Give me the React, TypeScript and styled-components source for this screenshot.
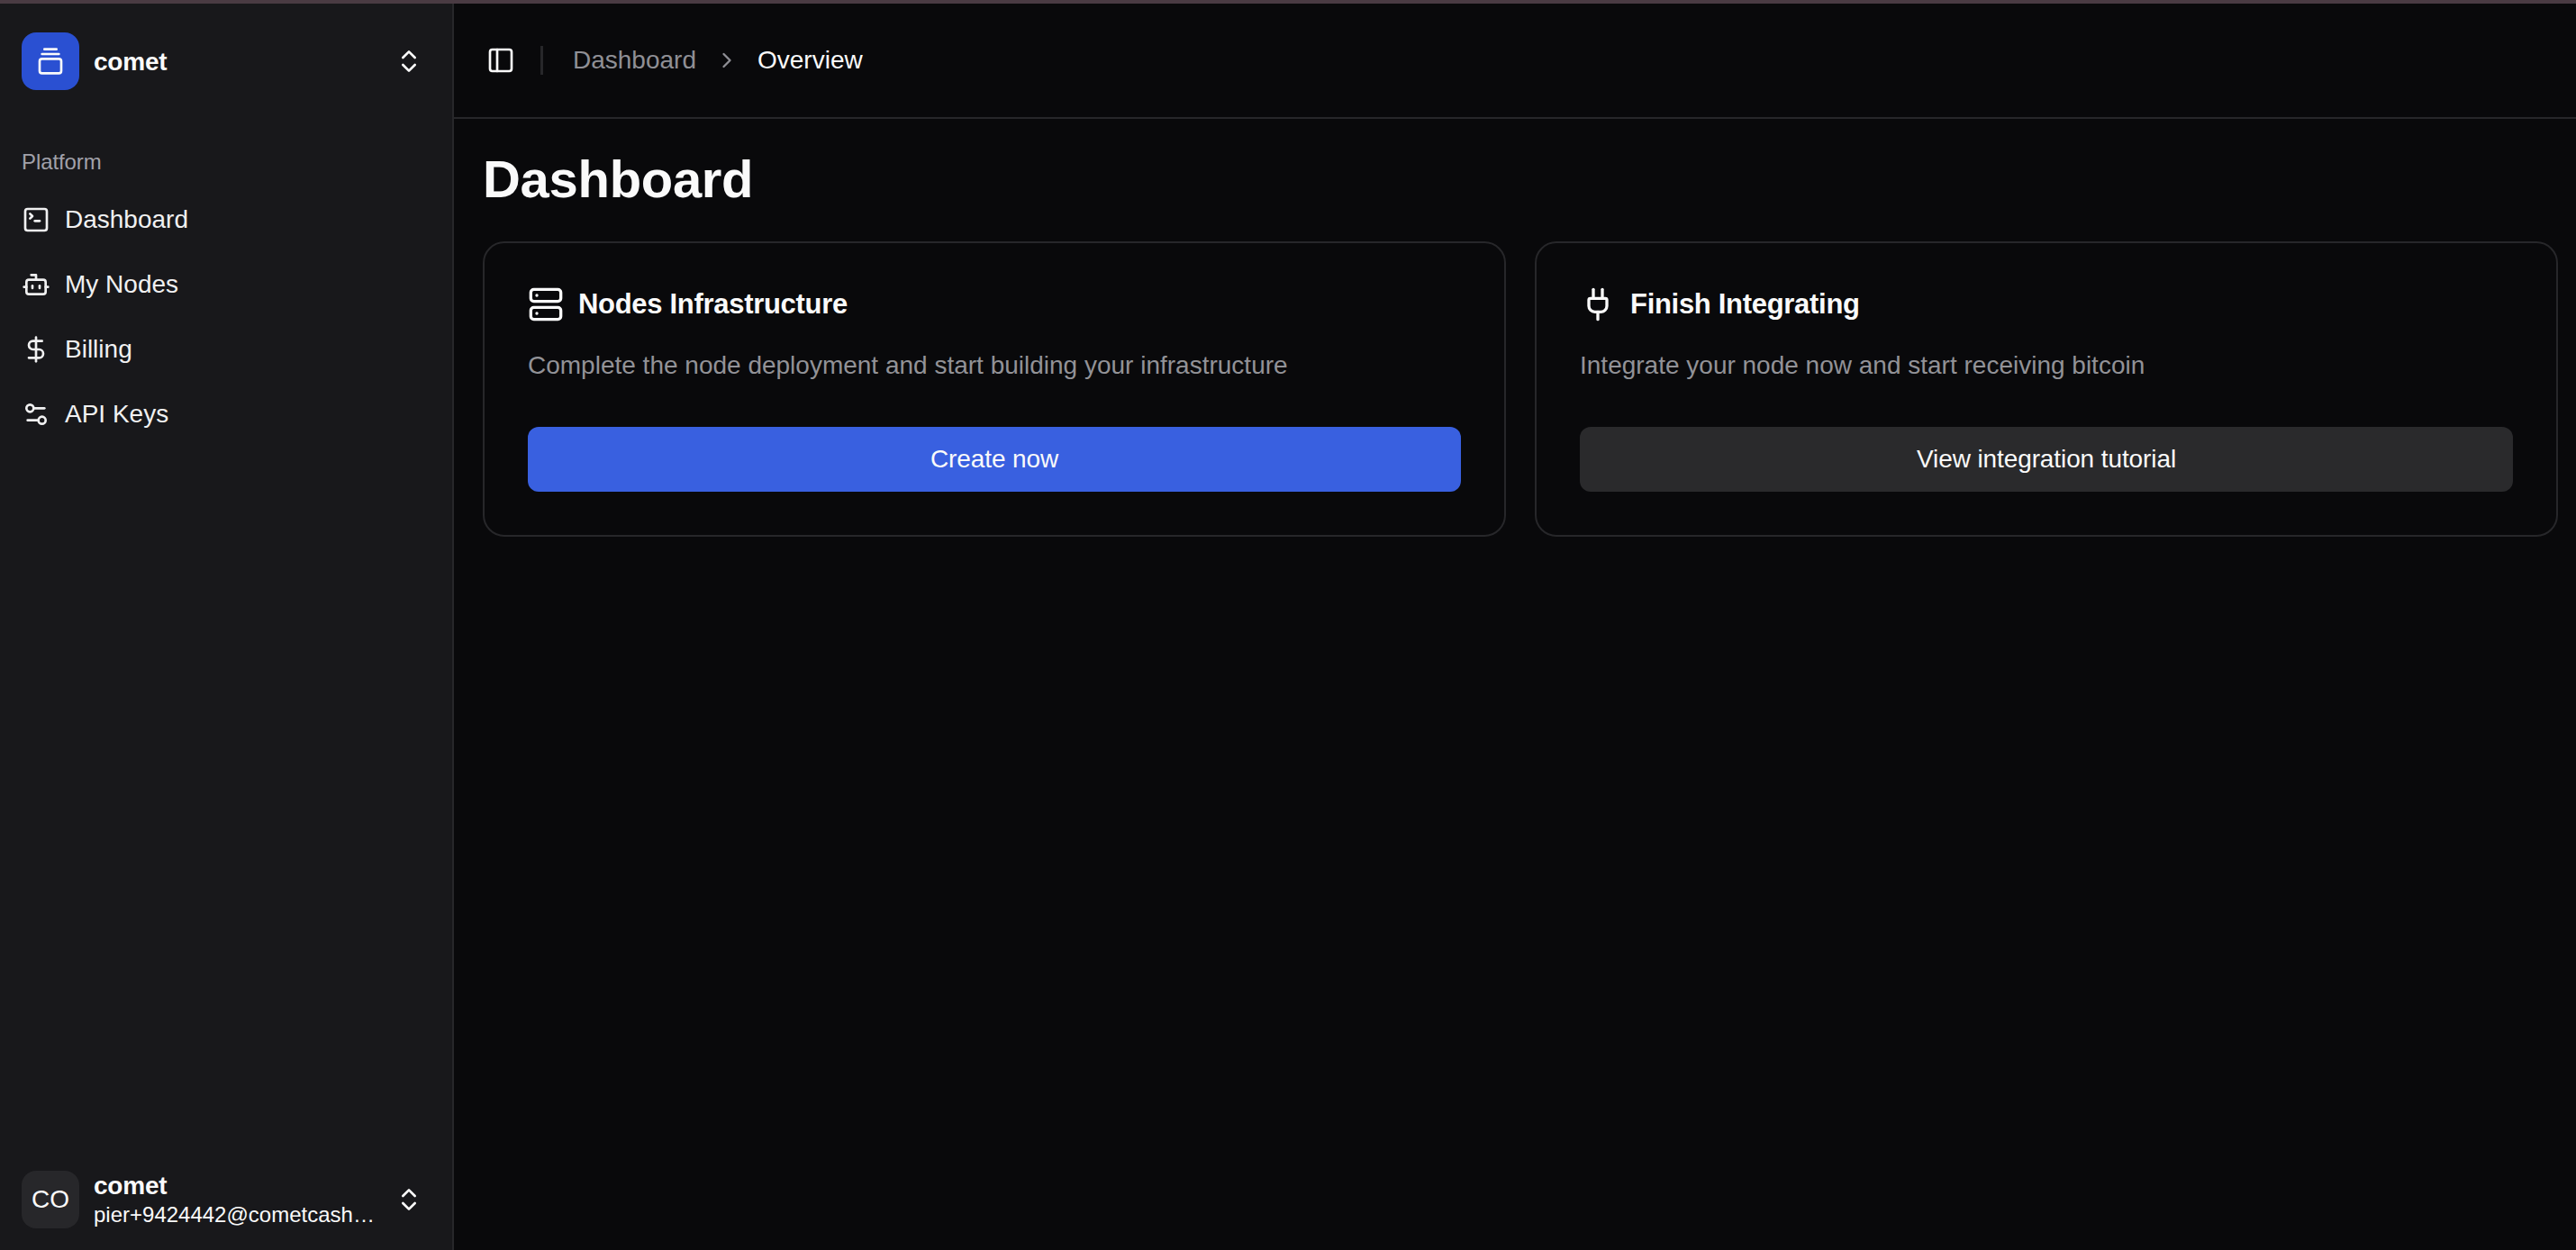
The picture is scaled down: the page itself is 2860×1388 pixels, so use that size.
import React from "react";
import styled, { createGlobalStyle } from "styled-components";
import {
  Bot,
  ChevronRight,
  ChevronsUpDown,
  DollarSign,
  GalleryVerticalEnd,
  PanelLeft,
  Plug,
  Server,
  Settings2,
  SquareTerminal,
} from "lucide-react";

const GlobalStyle = createGlobalStyle`
  * {
    box-sizing: border-box;
  }

  html,
  body {
    margin: 0;
    height: 100%;
    background: #09090b;
  }

  body {
    font-family: "Liberation Sans", Arial, sans-serif;
    color: #fafafa;
  }
`;

const Page = styled.div`
  display: flex;
  flex-direction: column;
  height: 100vh;
  overflow: hidden;
`;

const TopStrip = styled.div`
  flex: none;
  height: 4px;
  background: #4a3b43;
`;

const Shell = styled.div`
  display: flex;
  flex: 1;
  min-height: 0;
`;

const Sidebar = styled.aside`
  display: flex;
  flex: none;
  flex-direction: column;
  width: 504px;
  background: #18181b;
  border-right: 2px solid #27272a;
`;

const SidebarRow = styled.div`
  display: flex;
  align-items: center;
  padding: 32px 32px 0 24px;
`;

const FooterRow = styled(SidebarRow)`
  margin-top: auto;
  padding: 0 32px 24px 24px;
`;

const Tile = styled.div<{ $color: string }>`
  display: flex;
  flex: none;
  align-items: center;
  justify-content: center;
  width: 64px;
  height: 64px;
  border-radius: 16px;
  background: ${(p) => p.$color};
  font-size: 28px;
`;

const RowText = styled.div`
  display: flex;
  flex: 1;
  flex-direction: column;
  min-width: 0;
  margin-left: 16px;
  padding-top: 2px;
`;

const FooterText = styled(RowText)`
  height: 64px;
  padding-top: 1px;
`;

const Name = styled.span`
  font-weight: 700;
  font-size: 28px;
  line-height: 32px;
  letter-spacing: -0.2px;
`;

const Email = styled.span`
  overflow: hidden;
  width: 312px;
  font-size: 24px;
  line-height: 32px;
  white-space: nowrap;
  text-overflow: ellipsis;
`;

const NavGroup = styled.nav`
  display: flex;
  flex-direction: column;
  gap: 8px;
  padding: 0 24px;
`;

const GroupLabel = styled.div`
  margin: 60px 0 4px;
  font-size: 24px;
  line-height: 40px;
  color: #a1a1aa;
  letter-spacing: -0.1px;
`;

const NavItem = styled.a`
  display: flex;
  align-items: center;
  gap: 16px;
  height: 64px;
  font-size: 28px;
  color: #f0f0f1;
`;

const Main = styled.main`
  display: flex;
  flex: 1;
  flex-direction: column;
  min-width: 0;
`;

const TopBar = styled.header`
  display: flex;
  flex: none;
  align-items: center;
  height: 128px;
  padding: 0 36px;
  border-bottom: 2px solid #27272a;
`;

const Divider = styled.div`
  width: 3px;
  height: 32px;
  margin: 0 33px 0 28px;
  background: #27272a;
`;

const Crumbs = styled.div`
  display: flex;
  align-items: center;
  font-size: 28px;
`;

const Crumb = styled.span<{ $current?: boolean }>`
  color: ${(p) => (p.$current ? "#fafafa" : "#8f8f95")};
`;

const CrumbSeparator = styled.span`
  display: flex;
  margin: 0 20px;
  color: #8f8f95;
`;

const Content = styled.div`
  display: flex;
  flex-direction: column;
  padding: 30px 20px 0 32px;
`;

const PageTitle = styled.h1`
  margin: 0 0 32px;
  font-weight: 700;
  font-size: 58px;
  line-height: 74px;
  letter-spacing: -0.3px;
`;

const CardGrid = styled.div`
  display: grid;
  grid-template-columns: 1fr 1fr;
  gap: 32px;
`;

const Card = styled.section`
  display: flex;
  flex-direction: column;
  height: 328px;
  padding: 48px;
  border: 2px solid #27272a;
  border-radius: 24px;
`;

const CardHeading = styled.div`
  display: flex;
  align-items: center;
  gap: 16px;
  height: 40px;
`;

const CardTitle = styled.h2`
  margin: 0;
  font-weight: 700;
  font-size: 31px;
  letter-spacing: -0.3px;
`;

const CardText = styled.p`
  margin: 30px 0 0;
  font-size: 28px;
  line-height: 36px;
  color: #929297;
`;

const CardButton = styled.button<{ $primary?: boolean }>`
  width: 100%;
  height: 72px;
  margin-top: auto;
  border: 0;
  border-radius: 12px;
  background: ${(p) => (p.$primary ? "#3960e0" : "#2a2a2c")};
  font-family: inherit;
  font-size: 28px;
  color: #fafafa;
  letter-spacing: -0.1px;
`;

const navItems = [
  { label: "Dashboard", icon: SquareTerminal },
  { label: "My Nodes", icon: Bot },
  { label: "Billing", icon: DollarSign },
  { label: "API Keys", icon: Settings2 },
];

export default function App() {
  return (
    <Page>
      <GlobalStyle />
      <TopStrip />
      <Shell>
        <Sidebar>
          <SidebarRow>
            <Tile $color="#2a50d2">
              <GalleryVerticalEnd size={32} />
            </Tile>
            <RowText>
              <Name>comet</Name>
            </RowText>
            <ChevronsUpDown size={32} />
          </SidebarRow>

          <NavGroup>
            <GroupLabel>Platform</GroupLabel>
            {navItems.map(({ label, icon: Icon }) => (
              <NavItem key={label}>
                <Icon size={32} />
                {label}
              </NavItem>
            ))}
          </NavGroup>

          <FooterRow>
            <Tile $color="#27272a">CO</Tile>
            <FooterText>
              <Name>comet</Name>
              <Email>pier+9424442@cometcash.com</Email>
            </FooterText>
            <ChevronsUpDown size={32} />
          </FooterRow>
        </Sidebar>

        <Main>
          <TopBar>
            <PanelLeft size={32} />
            <Divider />
            <Crumbs>
              <Crumb>Dashboard</Crumb>
              <CrumbSeparator>
                <ChevronRight size={28} />
              </CrumbSeparator>
              <Crumb $current>Overview</Crumb>
            </Crumbs>
          </TopBar>

          <Content>
            <PageTitle>Dashboard</PageTitle>
            <CardGrid>
              <Card>
                <CardHeading>
                  <Server size={40} />
                  <CardTitle>Nodes Infrastructure</CardTitle>
                </CardHeading>
                <CardText>Complete the node deployment and start building your infrastructure</CardText>
                <CardButton $primary>Create now</CardButton>
              </Card>
              <Card>
                <CardHeading>
                  <Plug size={40} />
                  <CardTitle>Finish Integrating</CardTitle>
                </CardHeading>
                <CardText>Integrate your node now and start receiving bitcoin</CardText>
                <CardButton>View integration tutorial</CardButton>
              </Card>
            </CardGrid>
          </Content>
        </Main>
      </Shell>
    </Page>
  );
}
